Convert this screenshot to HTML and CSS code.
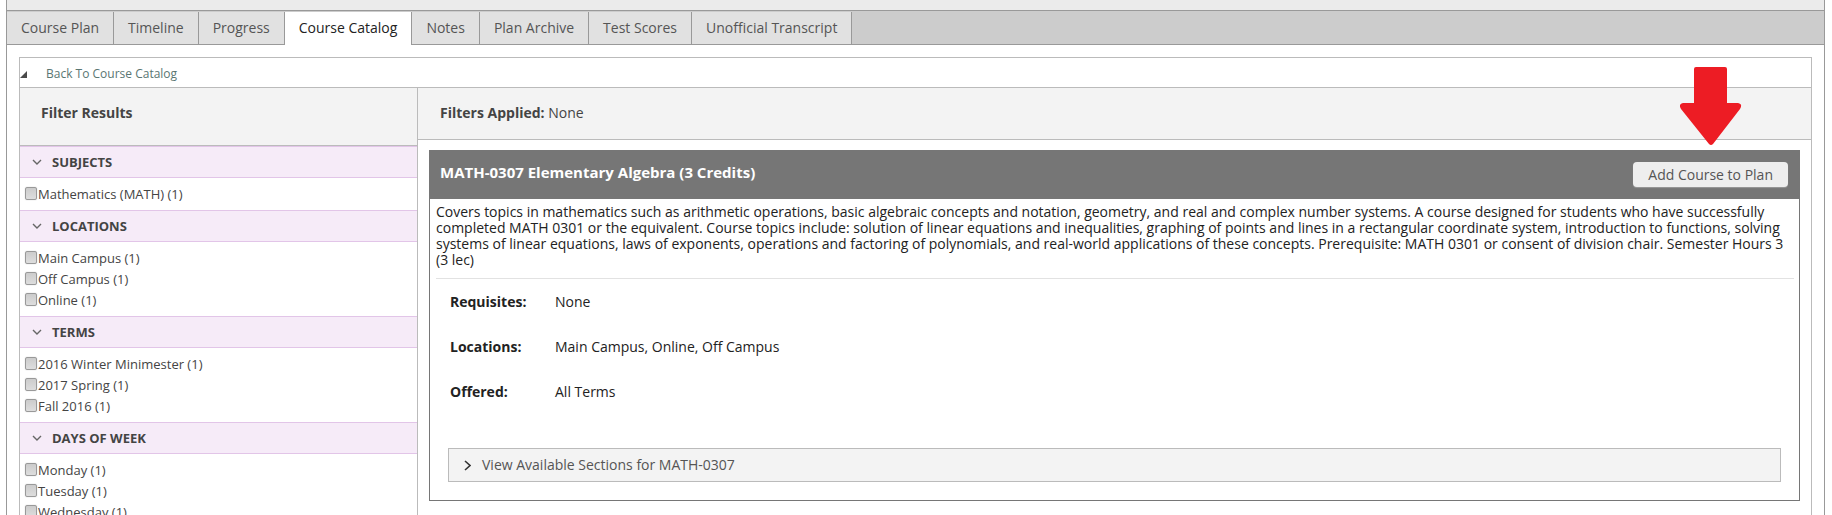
FILE: index.html
```html
<!DOCTYPE html>
<html lang="en">
<head>
<meta charset="utf-8">
<title>Course Catalog</title>
<link rel="stylesheet" href="styles.css">
</head>
<body>
<div class="frame">
  <div class="strip"></div>
  <nav class="tabs">
    <a class="tab" href="#">Course Plan</a>
    <a class="tab" href="#">Timeline</a>
    <a class="tab" href="#">Progress</a>
    <a class="tab active" href="#" aria-current="page">Course Catalog</a>
    <a class="tab" href="#">Notes</a>
    <a class="tab" href="#">Plan Archive</a>
    <a class="tab" href="#">Test Scores</a>
    <a class="tab" href="#">Unofficial Transcript</a>
  </nav>
  <div class="catalog">
    <div class="back">
      <svg class="corner" width="8" height="7" viewBox="0 0 8 7" aria-hidden="true"><path d="M0 7L7 0V7Z" fill="#4a4a4a"/></svg>
      <a class="back-link" href="#">Back To Course Catalog</a>
    </div>
    <div class="columns">
      <aside class="sidebar">
        <h2 class="sidebar-title">Filter Results</h2>
        <section class="group">
          <button class="group-head" type="button"><svg class="chevron" width="10" height="6" viewBox="0 0 10 6" aria-hidden="true"><path d="M1 1L5 5L9 1"/></svg>SUBJECTS</button>
          <div class="group-body">
            <label class="option"><input class="check" type="checkbox">Mathematics (MATH) (1)</label>
          </div>
        </section>
        <section class="group">
          <button class="group-head" type="button"><svg class="chevron" width="10" height="6" viewBox="0 0 10 6" aria-hidden="true"><path d="M1 1L5 5L9 1"/></svg>LOCATIONS</button>
          <div class="group-body">
            <label class="option"><input class="check" type="checkbox">Main Campus (1)</label>
            <label class="option"><input class="check" type="checkbox">Off Campus (1)</label>
            <label class="option"><input class="check" type="checkbox">Online (1)</label>
          </div>
        </section>
        <section class="group">
          <button class="group-head" type="button"><svg class="chevron" width="10" height="6" viewBox="0 0 10 6" aria-hidden="true"><path d="M1 1L5 5L9 1"/></svg>TERMS</button>
          <div class="group-body">
            <label class="option"><input class="check" type="checkbox">2016 Winter Minimester (1)</label>
            <label class="option"><input class="check" type="checkbox">2017 Spring (1)</label>
            <label class="option"><input class="check" type="checkbox">Fall 2016 (1)</label>
          </div>
        </section>
        <section class="group">
          <button class="group-head" type="button"><svg class="chevron" width="10" height="6" viewBox="0 0 10 6" aria-hidden="true"><path d="M1 1L5 5L9 1"/></svg>DAYS OF WEEK</button>
          <div class="group-body">
            <label class="option"><input class="check" type="checkbox">Monday (1)</label>
            <label class="option"><input class="check" type="checkbox">Tuesday (1)</label>
            <label class="option"><input class="check" type="checkbox">Wednesday (1)</label>
          </div>
        </section>
      </aside>
      <main class="results">
        <p class="applied"><strong>Filters Applied:</strong> None</p>
        <article class="course">
          <header class="course-head">
            <h3 class="course-title">MATH-0307 Elementary Algebra (3 Credits)</h3>
            <button class="add" type="button">Add Course to Plan</button>
            <svg class="pointer" width="62" height="79" viewBox="0 0 62 79" aria-hidden="true"><path d="M14 2Q14 0 16 0H45Q47 0 47 2V36H58Q63 37 60 42L33 77Q31 79 29 77L1 42Q-2 37 3 36H14Z" fill="#ed1c24"/></svg>
          </header>
          <div class="course-body">
            <p class="description">Covers topics in mathematics such as arithmetic operations, basic algebraic concepts and notation, geometry, and real and complex number systems. A course designed for students who have successfully completed MATH 0301 or the equivalent. Course topics include: solution of linear equations and inequalities, graphing of points and lines in a rectangular coordinate system, introduction to functions, solving systems of linear equations, laws of exponents, operations and factoring of polynomials, and real-world applications of these concepts. Prerequisite: MATH 0301 or consent of division chair. Semester Hours 3 (3 lec)</p>
            <dl class="facts">
              <dt>Requisites:</dt><dd>None</dd>
              <dt>Locations:</dt><dd>Main Campus, Online, Off Campus</dd>
              <dt>Offered:</dt><dd>All Terms</dd>
            </dl>
            <button class="sections" type="button"><svg class="expand" width="7" height="11" viewBox="0 0 7 11" aria-hidden="true"><path d="M1 1L6 5.5L1 10"/></svg>View Available Sections for MATH-0307</button>
          </div>
        </article>
      </main>
    </div>
  </div>
</div>
</body>
</html>
```
FILE: styles.css
```css
* { box-sizing: border-box; }

body {
  margin: 0;
  height: 100vh;
  overflow: hidden;
  background: #fff;
  color: #444;
  font: 14px/20px "Open Sans", sans-serif;
}

h2, h3, p, dl, dd { margin: 0; }
button { font-family: inherit; cursor: pointer; }

.frame {
  display: flex;
  flex-direction: column;
  height: 100%;
  margin: 0 7px 0 6px;
  border: solid #999;
  border-width: 0 1px;
}

.strip {
  flex: none;
  height: 11px;
  background: #ebebeb;
  border-bottom: 1px solid #999;
}

.tabs {
  display: flex;
  flex: none;
  padding-top: 1px;
  background: #ccc;
  border-bottom: 1px solid #999;
}

.tab {
  padding: 6px 14px;
  background: #e1e1e1;
  border-right: 1px solid #999;
  color: #555;
  text-decoration: none;
}

.tab.active {
  margin-bottom: -1px;
  background: #fff;
  color: #222;
}

.catalog {
  display: flex;
  flex: 1;
  flex-direction: column;
  min-height: 0;
  margin: 12px 12px 0;
  border: 1px solid #bbb;
  border-bottom: 0;
}

.back {
  display: flex;
  align-items: center;
  gap: 18px;
  padding: 6px 0 3px;
  border-bottom: 1px solid #bbb;
  font-size: 12px;
}

.back-link {
  color: #5a7672;
  text-decoration: none;
}

.columns {
  display: flex;
  flex: 1;
  min-height: 0;
}

.sidebar {
  flex: 0 0 398px;
  overflow: hidden;
  border-right: 1px solid #bbb;
}

.sidebar-title {
  padding: 15px 21px 22px;
  background: #f3f3f3;
  border-bottom: 1px solid #bbb;
  font-size: 14px;
  line-height: 20px;
}

.group-head {
  display: flex;
  align-items: center;
  gap: 10px;
  width: 100%;
  padding: 5px 12px;
  background: #f6ebf8;
  border: solid #e2c5e8;
  border-width: 1px 0;
  color: #444;
  font-size: 13px;
  font-weight: 700;
  line-height: 20px;
}

.chevron, .expand {
  fill: none;
  stroke: #666;
  stroke-width: 1.4;
}

.expand { stroke: #333; stroke-width: 1.6; }

.group-body { padding: 6px 5px 5px; }

.option {
  display: flex;
  align-items: center;
  gap: 1px;
  font-size: 13px;
  line-height: 21px;
}

.check {
  appearance: none;
  width: 12px;
  height: 13px;
  margin: 0 0 3px;
  background: linear-gradient(#ccc, #ddd);
  border: 1px solid #999;
  border-radius: 2px;
  box-shadow: 0 0 1px #aaa;
}

.results { flex: 1; min-width: 0; }

.applied {
  padding: 15px 22px 16px;
  background: #f3f3f3;
  border-bottom: 1px solid #bbb;
}

.course {
  margin: 10px 11px;
  border: 1px solid #767676;
}

.course-head {
  position: relative;
  display: flex;
  align-items: flex-start;
  justify-content: space-between;
  padding: 11px 11px 12px 10px;
  background: #767676;
}

.course-title {
  color: #fff;
  font-size: 15px;
  line-height: 20px;
}

.add {
  padding: 2px 15px;
  background: #eee;
  border: 0;
  border-radius: 4px;
  box-shadow: 0 1px 1px #999;
  color: #555;
  font-size: 14px;
  line-height: 21px;
}

.pointer {
  position: absolute;
  right: 57px;
  bottom: 53px;
}

.course-body { padding: 5px 5px 18px 6px; }

.description {
  padding-bottom: 10px;
  border-bottom: 1px solid #e2e2e2;
  color: #222;
  line-height: 16px;
}

.facts {
  display: grid;
  grid-template-columns: 105px 1fr;
  row-gap: 25px;
  padding: 13px 14px 46px;
  color: #222;
}

dt { font-weight: 700; }

.sections {
  display: flex;
  align-items: center;
  gap: 11px;
  width: calc(100% - 25px);
  margin-left: 12px;
  padding: 6px 15px;
  background: #f3f3f3;
  border: 1px solid #bbb;
  color: #555;
  font-size: 14px;
  line-height: 20px;
}
```
